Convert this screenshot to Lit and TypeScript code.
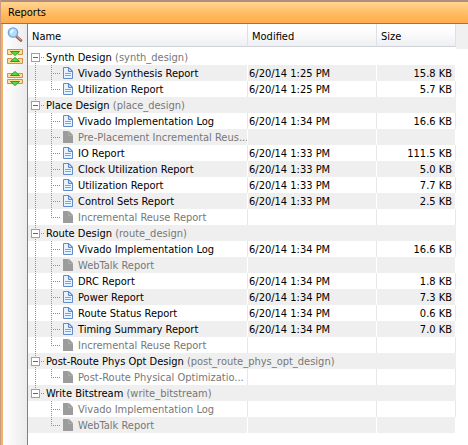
import { LitElement, html, css, svg, nothing } from "lit";
import { customElement, state } from "lit/decorators.js";
import { classMap } from "lit/directives/class-map.js";

interface Report {
  name: string;
  modified?: string;
  size?: string;
}
interface Group {
  name: string;
  step: string;
  reports: Report[];
}

const at = (name: string, time: string, size: string): Report => ({
  name,
  modified: `6/20/14 ${time} PM`,
  size: `${size} KB`,
});

const GROUPS: Group[] = [
  {
    name: "Synth Design",
    step: "synth_design",
    reports: [at("Vivado Synthesis Report", "1:25", "15.8"), at("Utilization Report", "1:25", "5.7")],
  },
  {
    name: "Place Design",
    step: "place_design",
    reports: [
      at("Vivado Implementation Log", "1:34", "16.6"),
      { name: "Pre-Placement Incremental Reus..." },
      at("IO Report", "1:33", "111.5"),
      at("Clock Utilization Report", "1:33", "5.0"),
      at("Utilization Report", "1:33", "7.7"),
      at("Control Sets Report", "1:33", "2.5"),
      { name: "Incremental Reuse Report" },
    ],
  },
  {
    name: "Route Design",
    step: "route_design",
    reports: [
      at("Vivado Implementation Log", "1:34", "16.6"),
      { name: "WebTalk Report" },
      at("DRC Report", "1:34", "1.8"),
      at("Power Report", "1:34", "7.3"),
      at("Route Status Report", "1:34", "0.6"),
      at("Timing Summary Report", "1:34", "7.0"),
      { name: "Incremental Reuse Report" },
    ],
  },
  {
    name: "Post-Route Phys Opt Design",
    step: "post_route_phys_opt_design",
    reports: [{ name: "Post-Route Physical Optimizatio..." }],
  },
  {
    name: "Write Bitstream",
    step: "write_bitstream",
    reports: [{ name: "Vivado Implementation Log" }, { name: "WebTalk Report" }],
  },
];

const searchIcon = svg`<svg width="16" height="16" viewBox="0 0 16 16" aria-hidden="true">
  <path d="M9.5 9.5L14 13.5" stroke="#8a4f4c" stroke-width="2.6" stroke-linecap="round"/>
  <path d="M9.8 9.2L14 13" stroke="#d09a90" stroke-width="1.2" stroke-linecap="round"/>
  <circle cx="6" cy="5.5" r="4.6" fill="#b5dcf7" stroke="#6aa6de" stroke-width="1.4"/>
  <path d="M3.2 5.2a3 3 0 0 1 4-2.4L4.4 7z" fill="#eef9ff"/>
</svg>`;

const collapseIcon = svg`<svg width="16" height="16" viewBox="0 0 16 16" aria-hidden="true">
  <path d="M.5.5H15.5V5.500H11V2.500H5V5.500H.5z" fill="#fbdc9c" stroke="#cf9440"/>
  <path d="M.5 14.500H15.500V9.500H11V12.500H5V9.500H.5z" fill="#fbdc9c" stroke="#cf9440"/>
  <path d="M3.500 2.500H12.500L8 6.500z" fill="#5fd83a" stroke="#2c9c1c"/>
  <path d="M3.500 12.500H12.500L8 8.500z" fill="#5fd83a" stroke="#2c9c1c"/>
</svg>`;

const expandIcon = svg`<svg width="16" height="16" viewBox="0 0 16 16" aria-hidden="true">
  <path d="M.5 2.500H15.500V6.500H.5z" fill="#fbdc9c" stroke="#cf9440"/>
  <path d="M.5 8.500H15.500V12.500H.5z" fill="#fbdc9c" stroke="#cf9440"/>
  <path d="M3.500 4.500H12.500L8 .5z" fill="#5fd83a" stroke="#2c9c1c"/>
  <path d="M3.500 10.500H12.500L8 14.500z" fill="#5fd83a" stroke="#2c9c1c"/>
</svg>`;

const docIcon = svg`<svg width="10" height="12" viewBox="0 0 10 12" aria-hidden="true">
  <path d="M.5.5H6L9.500 4V11.500H.5z" fill="#e8f2fd" stroke="#5f8acb"/>
  <path d="M5.500.5V4.500H9.500z" fill="#c4daf4" stroke="#5f8acb"/>
  <path d="M2 6.500H8M2 8.500H8" stroke="#7aa9e2"/>
</svg>`;

const missingIcon = svg`<svg width="10" height="12" viewBox="0 0 10 12" aria-hidden="true">
  <path d="M0 0H6L10 4V12H0z" fill="#9c9c9c"/>
  <path d="M5.500 0V4.500H10" fill="none" stroke="#acacac"/>
</svg>`;

@customElement("app-root")
export class AppRoot extends LitElement {
  @state() private closed: ReadonlySet<string> = new Set();

  static styles = css`
    :host {
      display: flex;
      flex-direction: column;
      box-sizing: border-box;
      min-height: 100vh;
      border-left: 1px solid #c89a84;
      font: 11px/16px "DejaVu Sans Condensed", "Tahoma", sans-serif;
      color: #000;
      background: #fff;
    }
    * {
      box-sizing: border-box;
    }
    h1 {
      margin: 0;
      height: 24px;
      padding: 0 7px;
      border-top: 2px solid #b08d7c;
      border-bottom: 1px solid #82777a;
      background: linear-gradient(#ffd591, #ffb95f 60%, #ffad4f);
      font: inherit;
      line-height: 21px;
    }
    .body {
      flex: 1;
      display: flex;
      border-left: 2px solid #f2b26c;
    }
    .tools {
      flex: none;
      width: 25px;
      padding: 3px 4px;
      display: flex;
      flex-direction: column;
      gap: 6px;
      border-right: 1px solid #808080;
      background: linear-gradient(to right, #fff, #ececec);
    }
    button {
      padding: 0;
      border: 0;
      background: none;
      display: block;
      font: inherit;
    }
    svg {
      display: block;
      flex: none;
    }
    .pane {
      flex: 1;
      min-width: 0;
      background: linear-gradient(#f0f0f0, #f0f0f0) top / 100% 25px no-repeat #fff;
      padding-right: 12px;
    }
    table {
      width: 100%;
      table-layout: fixed;
      border-collapse: separate;
      border-spacing: 0;
    }
    .modified {
      width: 129px;
    }
    .size {
      width: 79px;
    }
    th {
      height: 23px;
      padding: 4px 4px 0;
      font-weight: normal;
      text-align: left;
      background: linear-gradient(#fff, #fbfbfc 45%, #eeeff2);
      border-bottom: 1px solid #d0d2d6;
      border-right: 1px solid #dfe0e2;
    }
    td {
      height: 16px;
      padding: 0;
      white-space: nowrap;
      overflow: hidden;
      background: #fff;
    }
    .gap td {
      height: 2px;
    }
    .row td {
      border-right: 1px solid #e8e8e8;
    }
    .odd td {
      background: #efefef;
    }
    .odd.row td {
      border-right-color: #fff;
    }
    .row .date,
    .row .kb {
      padding-top: 2px;
      line-height: 14px;
    }
    .row .date {
      padding-left: 1px;
    }
    .row .kb {
      padding-right: 3px;
      text-align: right;
    }
    .cell {
      display: flex;
      align-items: center;
      height: 16px;
      padding-left: 3px;
    }
    .trunk,
    .branch {
      flex: none;
      align-self: stretch;
      background: repeating-linear-gradient(#909090 0 1px, transparent 1px 2px) 4px 0 / 1px 100% no-repeat;
    }
    .trunk {
      width: 16px;
    }
    .group .trunk {
      width: 15px;
      display: flex;
      align-items: center;
      gap: 1px;
    }
    .trunk.first {
      background-position: 4px 8px;
    }
    .trunk.end {
      background-size: 1px 8px;
    }
    .trunk.none {
      background: none;
    }
    .toggle {
      width: 9px;
      height: 9px;
      border: 1px solid #9a9fb4;
      background: #fff;
    }
    .toggle::before {
      content: "";
      display: block;
      height: 1px;
      margin: 0 1px;
      background: #5a5fa0;
    }
    .toggle.shut {
      background: linear-gradient(#5a5fa0, #5a5fa0) center / 1px 5px no-repeat #fff;
    }
    .stub {
      width: 4px;
      height: 1px;
      background: repeating-linear-gradient(to right, #909090 0 1px, transparent 1px 2px);
    }
    .branch {
      width: 16px;
      display: flex;
      align-items: center;
    }
    .branch.end {
      background-size: 1px 8px;
    }
    .branch .stub {
      width: 9px;
      margin-left: 4px;
    }
    .title,
    .label {
      padding-top: 2px;
      line-height: 14px;
    }
    .label {
      margin-left: 5px;
    }
    .step,
    .missing {
      color: #777;
    }
  `;

  private toggle(name: string) {
    const next = new Set(this.closed);
    if (!next.delete(name)) next.add(name);
    this.closed = next;
  }

  render() {
    let n = 0;
    const last = GROUPS.length - 1;
    return html`
      <h1>Reports</h1>
      <div class="body">
        <div class="tools">
          <button aria-label="Search">${searchIcon}</button>
          <button aria-label="Collapse all" @click=${() => (this.closed = new Set(GROUPS.map((g) => g.name)))}>
            ${collapseIcon}
          </button>
          <button aria-label="Expand all" @click=${() => (this.closed = new Set())}>${expandIcon}</button>
        </div>
        <div class="pane">
          <table>
            <thead>
              <tr>
                <th>Name</th>
                <th class="modified">Modified</th>
                <th class="size">Size</th>
              </tr>
            </thead>
            <tbody>
              <tr class="gap"><td colspan="3"></td></tr>
              ${GROUPS.map((g, i) => {
                const shut = this.closed.has(g.name);
                return html`
                  <tr class=${classMap({ group: true, odd: n++ % 2 === 1 })}>
                    <td colspan="3">
                      <div class="cell">
                        <span class=${classMap({ trunk: true, first: i === 0, end: i === last })}>
                          <button
                            class=${classMap({ toggle: true, shut })}
                            aria-label=${g.name}
                            aria-expanded=${shut ? "false" : "true"}
                            @click=${() => this.toggle(g.name)}
                          ></button>
                          <span class="stub"></span>
                        </span>
                        <span class="title">${g.name} <span class="step">(${g.step})</span></span>
                      </div>
                    </td>
                  </tr>
                  ${shut
                    ? nothing
                    : g.reports.map(
                        (r, k) => html`
                          <tr class=${classMap({ row: true, odd: n++ % 2 === 1 })}>
                            <td>
                              <div class="cell">
                                <span class=${classMap({ trunk: true, none: i === last })}></span>
                                <span class=${classMap({ branch: true, end: k === g.reports.length - 1 })}>
                                  <span class="stub"></span>
                                </span>
                                ${r.size ? docIcon : missingIcon}
                                <span class=${classMap({ label: true, missing: !r.size })}>${r.name}</span>
                              </div>
                            </td>
                            <td class="date">${r.modified}</td>
                            <td class="kb">${r.size}</td>
                          </tr>
                        `
                      )}
                `;
              })}
            </tbody>
          </table>
        </div>
      </div>
    `;
  }
}
